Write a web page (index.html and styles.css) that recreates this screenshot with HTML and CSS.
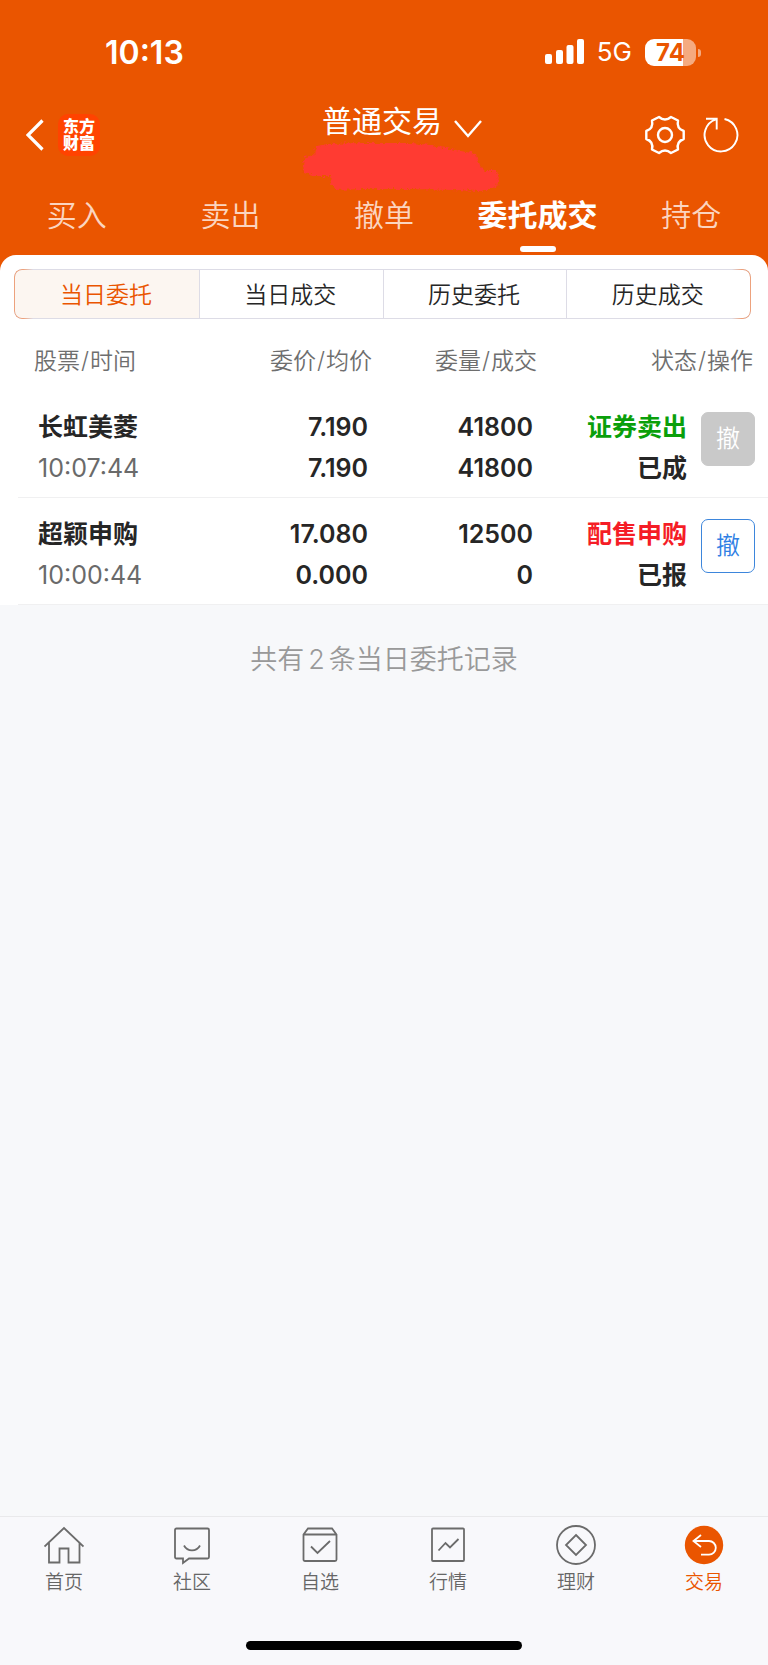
FILE: index.html
```html
<!DOCTYPE html>
<html lang="zh-CN">
<head>
<meta charset="utf-8">
<meta name="viewport" content="width=device-width, initial-scale=1">
<title>委托成交</title>
<link rel="stylesheet" href="styles.css">
</head>
<body>
<header class="header">
  <div class="status">
    <time class="clock">10:13</time>
    <div class="status-right">
      <svg class="signal" width="39" height="26" viewBox="0 0 39 26" fill="#fff" aria-hidden="true">
        <rect x="0" y="15" width="7" height="10" rx="2"/><rect x="11" y="11" width="7" height="14" rx="2"/><rect x="21.500" y="6" width="7" height="19" rx="2"/><rect x="32" y="0" width="7" height="25" rx="2"/>
      </svg>
      <span class="network">5G</span>
      <div class="battery"><span class="battery-level">74</span></div>
    </div>
  </div>
  <div class="toolbar">
    <div class="tools">
      <button class="icon-button" aria-label="返回">
        <svg width="18" height="32" viewBox="0 0 18 32" fill="none" stroke="#fff" stroke-width="3.200"><path d="M16.500 1.500 2 16l14.500 14.500"/></svg>
      </button>
      <span class="logo">东方<br>财富</span>
    </div>
    <div class="account">
      <button class="title">普通交易
        <svg class="title-arrow" width="28" height="18" viewBox="0 0 28 18" fill="none" stroke="#fff" stroke-width="2.400"><path d="M1 1l13 15L27 1"/></svg>
      </button>
      <svg class="scribble" width="200" height="52" viewBox="0 0 200 52" aria-hidden="true">
        <filter id="rough" x="-5%" y="-10%" width="110%" height="120%"><feTurbulence type="fractalNoise" baseFrequency=".35" numOctaves="2" seed="4"/><feDisplacementMap in="SourceGraphic" scale="6" xChannelSelector="R" yChannelSelector="G"/></filter>
        <path filter="url(#rough)" fill="#ff3b30" d="M2 24 4 17 13 15 15 6 27 4 60 3 110 3 130 5 150 9 175 14 179 26 184 31 196 31 198 38 196 47 180 51 150 50 110 49 60 49 35 50 30 43 29 36 14 36 3 32Z"/>
      </svg>
    </div>
    <div class="tools tools-end">
      <button class="icon-button" aria-label="设置">
        <svg width="42" height="42" viewBox="-21 -21 42 42" fill="none" stroke="#fff" stroke-width="2.400" stroke-linejoin="round"><path d="M18.700 -4 V4 Q11.300 6.500 13 14.500 L6 18 Q0 13 -6 18 L-13 14.500 Q-11.300 6.500 -18.700 4 V-4 Q-11.300 -6.500 -13 -14.500 L-6 -18 Q0 -13 6 -18 L13 -14.500 Q11.300 -6.500 18.700 -4Z"/><circle r="7"/></svg>
      </button>
      <button class="icon-button" aria-label="刷新">
        <svg width="38" height="38" viewBox="-19 -19 38 38" fill="none" stroke="#fff" stroke-width="1.900"><path d="M3.500 -16 A16.400 16.400 0 1 1 -5 -15.600 M-15 -16.200 H-4.300 V-5.500"/></svg>
      </button>
    </div>
  </div>
  <nav class="tabs">
    <a class="tab" href="#buy">买入</a>
    <a class="tab" href="#sell">卖出</a>
    <a class="tab" href="#cancel">撤单</a>
    <a class="tab tab-active" href="#orders" aria-current="page">委托成交</a>
    <a class="tab" href="#positions">持仓</a>
  </nav>
</header>

<main class="main">
  <section class="sheet">
    <div class="segments">
      <button class="segment segment-active">当日委托</button>
      <button class="segment">当日成交</button>
      <button class="segment">历史委托</button>
      <button class="segment">历史成交</button>
    </div>
    <table class="orders">
      <colgroup><col class="col-name"><col class="col-price"><col class="col-amount"><col class="col-state"><col class="col-action"></colgroup>
      <thead>
        <tr><th>股票<span class="slash">/</span>时间</th><th>委价<span class="slash">/</span>均价</th><th>委量<span class="slash">/</span>成交</th><th colspan="2">状态<span class="slash">/</span>操作</th></tr>
      </thead>
      <tbody>
        <tr>
          <td><div>长虹美菱</div><div class="time">10:07:44</div></td>
          <td><div>7.190</div><div>7.190</div></td>
          <td><div>41800</div><div>41800</div></td>
          <td><div class="sell">证券卖出</div><div>已成</div></td>
          <td><button class="cancel" disabled>撤</button></td>
        </tr>
        <tr>
          <td><div>超颖申购</div><div class="time">10:00:44</div></td>
          <td><div>17.080</div><div>0.000</div></td>
          <td><div>12500</div><div>0</div></td>
          <td><div class="buy">配售申购</div><div>已报</div></td>
          <td><button class="cancel">撤</button></td>
        </tr>
      </tbody>
    </table>
  </section>
  <p class="summary">共有<span class="count">2</span>条当日委托记录</p>
</main>

<footer class="footer">
  <nav class="bottom-nav">
    <a class="nav-item" href="#home">
      <svg class="nav-icon" viewBox="0 0 40 40"><path d="M.500 21.500 20 3l19.500 18.500M5 18v19.500h10.500V23.500h9V37.500H35.500V18"/></svg>首页
    </a>
    <a class="nav-item" href="#community">
      <svg class="nav-icon" viewBox="0 0 40 40"><path d="M4.500 3.500h31q1.500 0 1.500 1.500v27q0 1.500-1.500 1.500H17L11 38v-4.500H4.500Q3 33.500 3 32V5q0-1.500 1.500-1.500Z"/><path d="M12 20.500c3.500 6.500 12.500 6.500 16 0"/></svg>社区
    </a>
    <a class="nav-item" href="#watchlist">
      <svg class="nav-icon" viewBox="0 0 40 40"><path d="M3.500 9.500 8 3.500h24l4.500 6V34.500q0 1.500-1.500 1.500H5q-1.500 0-1.500-1.500ZM4 9.500h32M11 21.500l6.500 6.500L30 16"/></svg>自选
    </a>
    <a class="nav-item" href="#market">
      <svg class="nav-icon" viewBox="0 0 40 40"><rect x="4" y="3.500" width="32" height="32.500" rx="1"/><path d="M10.500 25.500 17.500 18l4.500 4.500 8.500-8.500"/></svg>行情
    </a>
    <a class="nav-item" href="#wealth">
      <svg class="nav-icon" viewBox="0 0 40 40"><circle cx="20" cy="20" r="19"/><path d="M20 10 30 20 20 30 10 20Z"/></svg>理财
    </a>
    <a class="nav-item nav-active" href="#trade" aria-current="page">
      <svg class="nav-icon" viewBox="0 0 40 40"><circle cx="20" cy="20" r="19.200" fill="#ea5500" stroke="none"/><path stroke="#fff" d="M17 10 9.500 16l7.500 6M9.500 16H25a6.800 6.800 0 0 1 0 13.600H17"/></svg>交易
    </a>
  </nav>
  <div class="home-bar"></div>
</footer>
</body>
</html>
```
FILE: styles.css
```css
* { box-sizing: border-box; }

body {
  margin: 0;
  min-height: 100vh;
  display: flex;
  flex-direction: column;
  background: #f7f8fa;
  color: #262626;
  font-family: Inter, "Noto Sans CJK SC", sans-serif;
}

button {
  margin: 0;
  padding: 0;
  border: 0;
  background: none;
  color: inherit;
  font: inherit;
}

a { color: inherit; text-decoration: none; }
svg { display: block; flex: none; }

/* Header */
.header {
  background: #ea5500;
  color: #fff;
  padding-bottom: 19px;
}

.status {
  height: 104px;
  padding: 0 67px 0 105px;
  display: flex;
  align-items: center;
  justify-content: space-between;
}

.clock { font-size: 32px; font-weight: 600; }
.status-right { display: flex; align-items: center; }
.network { margin: 0 13px; font-size: 26px; line-height: 28px; }

.battery {
  position: relative;
  width: 51px;
  height: 27px;
  margin-right: 5px;
  border-radius: 9px;
  background: linear-gradient(to right, #fff 74%, #f5aa80 74%);
  color: #ea5500;
  font-size: 24px;
  font-weight: 700;
  line-height: 27px;
  text-align: center;
}

.battery::after {
  content: "";
  position: absolute;
  left: 53px;
  top: 10px;
  width: 3px;
  height: 8px;
  border-radius: 0 4px 4px 0;
  background: #f5aa80;
}

.toolbar {
  display: grid;
  grid-template-columns: 1fr auto 1fr;
  align-items: start;
  padding: 0 28px 0 26px;
}

.tools { display: flex; align-items: center; height: 62px; gap: 14px; }
.tools-end { justify-content: flex-end; gap: 16px; }

.logo {
  width: 42px;
  height: 42px;
  padding-top: 4px;
  border-radius: 10px;
  background: #ff4300;
  font-size: 16px;
  font-weight: 900;
  line-height: 17px;
  text-align: center;
}

.account { padding-left: 38px; }

.title {
  display: flex;
  align-items: center;
  gap: 12px;
  height: 36px;
  padding-bottom: 2px;
  font-size: 30px;
  line-height: 34px;
}

.title-arrow { align-self: flex-end; }
.scribble { margin: 0 -21px; }

.tabs { display: grid; grid-template-columns: repeat(5, 1fr); }

.tab {
  display: flex;
  flex-direction: column;
  align-items: center;
  gap: 8px;
  color: #fbd5c0;
  font-size: 30px;
  font-weight: 350;
  line-height: 46px;
}

.tab-active { color: #fff; font-weight: 700; }

.tab-active::after {
  content: "";
  width: 36px;
  height: 6px;
  border-radius: 3px;
  background: #fff;
}

/* Orders */
.main { flex: 1; }

.sheet {
  position: relative;
  margin-top: -16px;
  padding-top: 14px;
  border-radius: 16px 16px 0 0;
  background: #fff;
}

.segments {
  display: grid;
  grid-template-columns: repeat(4, 1fr);
  height: 50px;
  margin: 0 17px 0 14px;
  border: 1px solid #dddce6;
  border-radius: 8px;
}

.segment {
  position: relative;
  padding: 0 2px 2px 0;
  border-left: 1px solid #dddce6;
  font-size: 23px;
  font-weight: 350;
}

.segment:first-child { border-left: 0; border-radius: 7px 0 0 7px; }
.segment-active { background: #fcf6f1; color: #ea5500; }

.segment:first-child::before,
.segment:last-child::before {
  content: "";
  position: absolute;
  top: -1px;
  bottom: -1px;
  width: 18px;
  border: 1px solid #eda27d;
}

.segment:first-child::before {
  left: -1px;
  border-right: 0;
  border-radius: 8px 0 0 8px;
  mask: linear-gradient(to right, #000 50%, transparent);
}

.segment:last-child::before {
  right: -1px;
  border-left: 0;
  border-radius: 0 8px 8px 0;
  mask: linear-gradient(to left, #000 50%, transparent);
}

.orders {
  width: calc(100% - 18px);
  margin-left: 18px;
  table-layout: fixed;
  border-spacing: 0;
}

.col-price { width: 23%; }
.col-amount { width: 22%; }
.col-state { width: 20%; }
.col-action { width: 81px; }

.orders th {
  padding: 25px 0 13px;
  color: #6e6e6e;
  font-size: 23px;
  font-weight: 350;
  line-height: 34px;
  text-align: right;
}

.orders th:first-child { padding-left: 16px; text-align: left; }
.orders th:last-child { padding-right: 15px; }
.slash { margin: 0 1px; }

.orders td {
  padding: 16px 0 8px;
  border-bottom: 1px solid #f0f0f1;
  font-size: 25px;
  font-weight: 600;
  line-height: 41px;
  text-align: right;
  vertical-align: top;
}

.orders td:first-child { padding-left: 20px; text-align: left; }
.orders td:nth-child(2),
.orders td:nth-child(3) { padding-right: 4px; }
.orders td:last-child { padding: 21px 13px 0 0; }

.orders .time { color: #6a6a6a; font-weight: 400; }
.sell { color: #0a9f0a; }
.buy { color: #f51d26; }

.cancel {
  width: 54px;
  height: 54px;
  border: 1px solid #3d86dc;
  border-radius: 7px;
  color: #2f80e4;
  font-size: 24px;
  font-weight: 350;
  line-height: 50px;
  vertical-align: top;
}

.cancel:disabled { border-color: #c9c9c9; background: #c9c9c9; color: #fff; }

.summary {
  margin: 35px 0 0;
  color: #999;
  font-size: 27px;
  font-weight: 350;
  line-height: 40px;
  text-align: center;
}

.count { margin: 0 4px; }

/* Bottom bar */
.footer {
  border-top: 1px solid #e9e9eb;
  background: #f8f8fb;
  padding: 8px 0 15px;
}

.bottom-nav { display: grid; grid-template-columns: repeat(6, 1fr); }

.nav-item {
  display: flex;
  flex-direction: column;
  align-items: center;
  gap: 4px;
  color: #666;
  font-size: 19px;
  font-weight: 350;
  line-height: 28px;
}

.nav-active { color: #ea5500; }

.nav-icon {
  width: 40px;
  height: 40px;
  fill: none;
  stroke: #6b6b6b;
  stroke-width: 1.800;
}

.home-bar {
  width: 36%;
  height: 9px;
  margin: 44px auto 0;
  border-radius: 5px;
  background: #000;
}
```
